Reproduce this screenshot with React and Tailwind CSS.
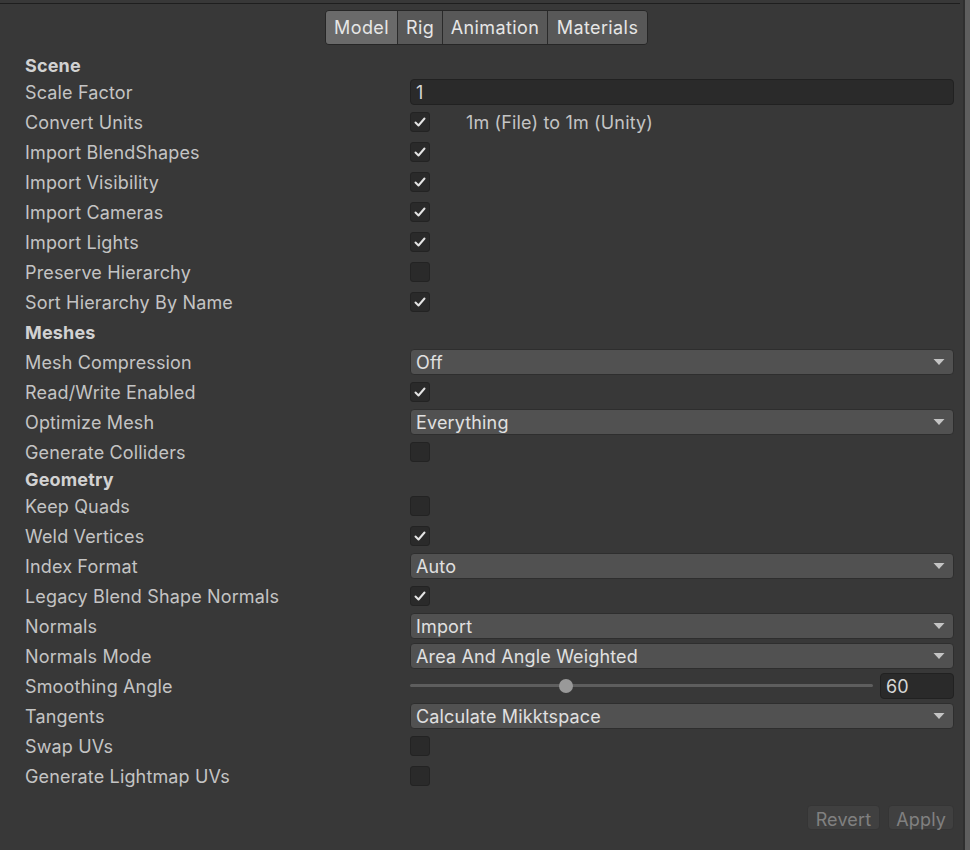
import { useState } from 'react';

const tabs = [
  { name: 'Model', w: 'w-[71px]' },
  { name: 'Rig', w: 'w-[45px]' },
  { name: 'Animation', w: 'w-[105px]' },
  { name: 'Materials', w: 'w-[100px]' },
];

function Check({ on }) {
  return (
    <div className="flex h-5 w-5 items-center justify-center rounded-[3px] border border-[#232323] bg-[#2a2a2a]">
      {on && (
        <svg width="14" height="14" viewBox="0 0 14 14" fill="none">
          <path d="M2.5 7.5 L5.5 10.5 L11.5 3.5" stroke="#e4e4e4" strokeWidth="2" strokeLinecap="round" strokeLinejoin="round" />
        </svg>
      )}
    </div>
  );
}

function Dropdown({ value }) {
  return (
    <div className="flex h-[26px] w-full items-center justify-between rounded-[4px] border border-[#2e2e2e] bg-[#515151] pl-[5px] pr-[8px] text-[#e0e0e0]">
      <span>{value}</span>
      <svg width="12" height="8" viewBox="0 0 12 8">
        <path d="M0.5 1 L11.5 1 L6 7 Z" fill="#c4c4c4" />
      </svg>
    </div>
  );
}

function Row({ label, children }) {
  return (
    <div className="flex h-[30px] items-center">
      <div className="w-[385px] shrink-0">{label}</div>
      <div className="flex flex-1 items-center pr-[9px]">{children}</div>
    </div>
  );
}

function Header({ children }) {
  return <div className="flex h-6 items-center font-bold text-[#d2d2d2]">{children}</div>;
}

export default function App() {
  const [tab, setTab] = useState('Model');

  return (
    <div className="flex h-[850px] w-[970px] bg-[#383838] text-[18px] tracking-[0.15px] text-[#c4c4c4]" style={{ fontFamily: 'Inter, "Noto Sans", sans-serif' }}>
      <div className="flex flex-1 flex-col">
        <div className="mt-[3px] h-px w-[960px] bg-[#1e1e1e]" />

        {/* TABS */}
        <div className="mt-[6px] flex justify-center pl-[10px]">
          <div className="flex h-[35px] overflow-hidden rounded-[4px] border border-[#262626] text-[18px] tracking-[0.4px] text-[#e6e6e6]">
            {tabs.map((t, i) => (
              <button
                key={t.name}
                onClick={() => setTab(t.name)}
                className={`${t.w} ${i > 0 ? 'border-l border-[#2a2a2a]' : ''} ${tab === t.name ? 'bg-[#6a6a6a]' : 'bg-[#585858]'}`}
              >
                {t.name}
              </button>
            ))}
          </div>
        </div>

        <div className="mt-[8px] pl-[25px]">
          <Header>Scene</Header>
          <Row label="Scale Factor">
            <div className="flex h-[26px] w-full items-center rounded-[4px] border border-[#212121] bg-[#2a2a2a] px-[5px] text-[#d6d6d6]">1</div>
          </Row>
          <Row label="Convert Units">
            <Check on />
            <span className="ml-[36px]">1m (File) to 1m (Unity)</span>
          </Row>
          <Row label="Import BlendShapes"><Check on /></Row>
          <Row label="Import Visibility"><Check on /></Row>
          <Row label="Import Cameras"><Check on /></Row>
          <Row label="Import Lights"><Check on /></Row>
          <Row label="Preserve Hierarchy"><Check /></Row>
          <Row label="Sort Hierarchy By Name"><Check on /></Row>

          <div className="flex h-[30px] items-center font-bold text-[#d2d2d2]">Meshes</div>
          <Row label="Mesh Compression"><Dropdown value="Off" /></Row>
          <Row label="Read/Write Enabled"><Check on /></Row>
          <Row label="Optimize Mesh"><Dropdown value="Everything" /></Row>
          <Row label="Generate Colliders"><Check /></Row>

          <Header>Geometry</Header>
          <Row label="Keep Quads"><Check /></Row>
          <Row label="Weld Vertices"><Check on /></Row>
          <Row label="Index Format"><Dropdown value="Auto" /></Row>
          <Row label="Legacy Blend Shape Normals"><Check on /></Row>
          <Row label="Normals"><Dropdown value="Import" /></Row>
          <Row label="Normals Mode"><Dropdown value="Area And Angle Weighted" /></Row>
          <Row label="Smoothing Angle">
            <div className="relative mr-[7px] h-[14px] flex-1">
              <div className="absolute left-0 right-0 top-[5px] h-[3px] rounded-full bg-[#5e5e5e]" />
              <div className="absolute left-[149px] top-0 h-[14px] w-[14px] rounded-full bg-[#999999]" />
            </div>
            <div className="flex h-[26px] w-[74px] items-center rounded-[4px] border border-[#212121] bg-[#2a2a2a] px-[5px] text-[#d6d6d6]">60</div>
          </Row>
          <Row label="Tangents"><Dropdown value="Calculate Mikktspace" /></Row>
          <Row label="Swap UVs"><Check /></Row>
          <Row label="Generate Lightmap UVs"><Check /></Row>
        </div>

        {/* FOOTER */}
        <div className="mt-[14px] flex justify-end gap-[8px] pr-[9px]">
          <button className="h-[25px] rounded-[4px] border border-[#353535] bg-[#404040] px-[8px] text-[#808080]">Revert</button>
          <button className="h-[25px] rounded-[4px] border border-[#353535] bg-[#404040] px-[7px] text-[#808080]">Apply</button>
        </div>
      </div>

      {/* SCROLLBAR */}
      <div className="w-[7px] border-l-2 border-[#2f2f2f] bg-[#5e5e5e]" />
    </div>
  );
}
